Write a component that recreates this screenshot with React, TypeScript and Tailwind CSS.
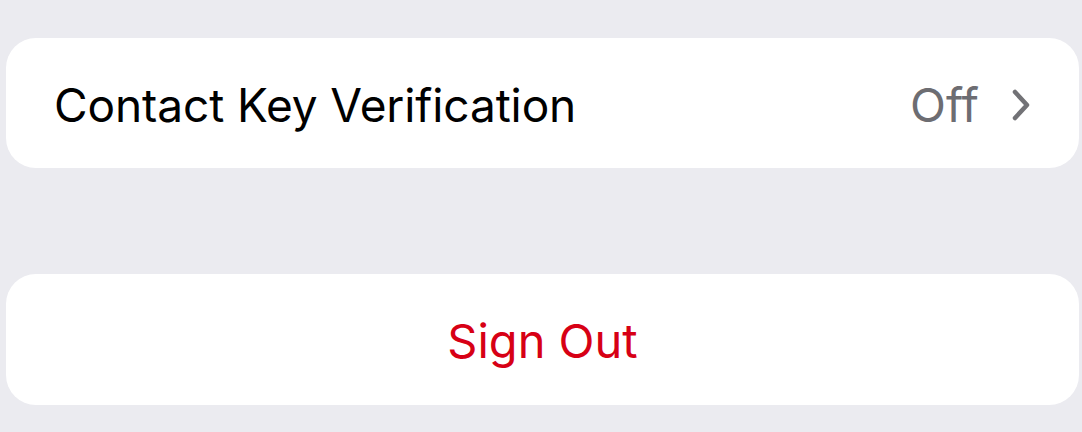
import React from 'react';

function Chevron() {
  return (
    <svg width="22" height="34" viewBox="0 0 22 34" fill="none" className="shrink-0">
      <path d="M5 4 L17 17 L5 30" stroke="#727276" strokeWidth="4.5" strokeLinecap="round" strokeLinejoin="round" />
    </svg>
  );
}

export default function App() {
  return (
    <div
      className="w-[1082px] h-[432px] bg-[#ebebf0] px-[6px] pt-[38px] overflow-hidden"
      style={{ fontFamily: 'Inter, "Noto Sans", sans-serif' }}
    >
      <button className="w-[1073px] h-[130px] bg-white rounded-[30px] flex items-center pl-[48px] pr-[47px] pt-[4px] text-left">
        <span className="flex-1 text-[46px] text-black tracking-[-0.1px]">Contact Key Verification</span>
        <span className="text-[47px] text-[#6d6d72] mr-[31px]">Off</span>
        <Chevron />
      </button>

      <button className="mt-[106px] w-[1073px] h-[131px] bg-white rounded-[30px] flex items-center justify-center pt-[3px]">
        <span className="text-[47px] text-[#d70015]">Sign Out</span>
      </button>
    </div>
  );
}
